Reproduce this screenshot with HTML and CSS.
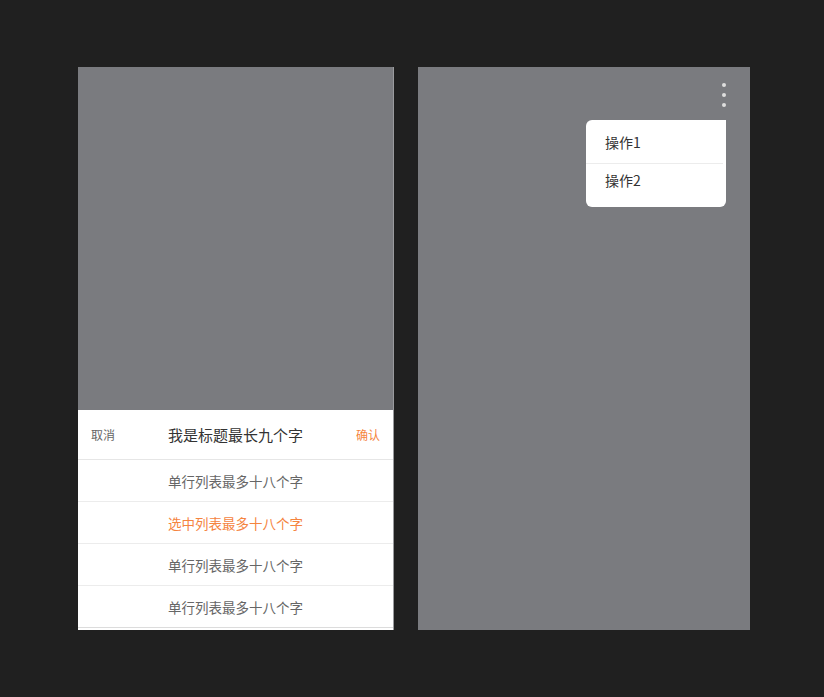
FILE: index.html
```html
<!DOCTYPE html>
<html lang="zh-CN">
<head>
    <meta charset="UTF-8">
    <meta name="viewport" content="width=device-width, initial-scale=1.0">
    <title>选择器</title>
    <link rel="stylesheet" href="styles.css">
</head>
<body>

    <div class="stage">
        <!-- 底部弹出的单选列表 -->
        <div class="screen screen-left">
            <div class="sheet">
                <div class="sheet-header">
                    <span class="sheet-cancel">取消</span>
                    <span class="sheet-title">我是标题最长九个字</span>
                    <span class="sheet-confirm">确认</span>
                </div>
                <ul class="sheet-list">
                    <li>单行列表最多十八个字</li>
                    <li class="selected">选中列表最多十八个字</li>
                    <li>单行列表最多十八个字</li>
                    <li>单行列表最多十八个字</li>
                </ul>
            </div>
        </div>

        <!-- 右上角更多操作菜单 -->
        <div class="screen screen-right">
            <div class="more">
                <span></span><span></span><span></span>
            </div>
            <ul class="menu">
                <li>操作1</li>
                <li>操作2</li>
            </ul>
        </div>
    </div>

</body>
</html>
```

FILE: styles.css
```css
 body {
     font-family: "Noto Sans CJK SC", "Noto Sans", sans-serif;
     margin: 0;
     padding: 0;
     background-color: #202020;
 }
.stage {
     display: flex;
     gap: 24px;
     padding: 67px 0 0 78px;
 }
.screen {
     height: 563px;
     background-color: #7a7b7f;
     position: relative;
 }
.screen-left {
     width: 316px;
     display: flex;
     flex-direction: column;
     justify-content: flex-end;
     border-right: 1px solid #9a9b9e;
     box-sizing: border-box;
 }
.screen-right {
     width: 332px;
 }
.sheet {
     background: white;
     padding-bottom: 2px;
 }
.sheet-header {
     display: flex;
     align-items: center;
     justify-content: space-between;
     height: 49px;
     padding: 0 13px 0 13px;
     border-bottom: 1px solid #e6e6e6;
 }
.sheet-cancel {
     font-size: 12px;
     color: #666;
 }
.sheet-title {
     font-size: 15px;
     color: #333;
 }
.sheet-confirm {
     font-size: 12px;
     color: #f5843f;
 }
.sheet-list {
     list-style: none;
     padding: 0;
     margin: 0;
 }
.sheet-list li {
     height: 41px;
     line-height: 42px;
     text-align: center;
     font-size: 13.5px;
     color: #666;
     border-bottom: 1px solid #ececec;
 }
.sheet-list li:last-child {
     border-bottom-color: #dcdcdc;
 }
.sheet-list li.selected {
     color: #f5843f;
 }
.more {
     position: absolute;
     top: 16px;
     right: 24px;
     display: flex;
     flex-direction: column;
     gap: 6px;
 }
.more span {
     width: 4px;
     height: 4px;
     border-radius: 50%;
     background: #dedede;
 }
.menu {
     position: absolute;
     top: 53px;
     left: 168px;
     width: 140px;
     list-style: none;
     margin: 0;
     padding: 4px 0 9px;
     background: white;
     border-radius: 6px 0 6px 6px;
 }
.menu li {
     height: 39px;
     line-height: 36px;
     padding-left: 19px;
     font-size: 14px;
     color: #333;
 }
.menu li + li {
     height: 34px;
     line-height: 32px;
     border-top: 1px solid #ececec;
     margin-right: 3px;
 }
```
